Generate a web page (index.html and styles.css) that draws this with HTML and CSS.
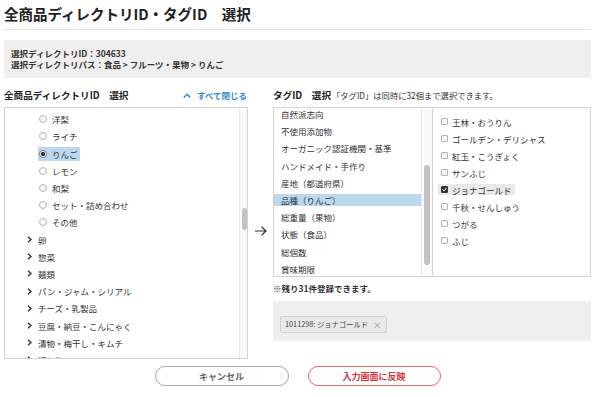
FILE: index.html
```html
<!DOCTYPE html>
<html lang="ja">
<head>
<meta charset="utf-8">
<title>全商品ディレクトリID・タグID 選択</title>
<link rel="stylesheet" href="styles.css">
</head>
<body>
<div class="page">
  <h1 class="title">全商品ディレクトリID・タグID　選択</h1>
  <div class="info">
    <p>選択ディレクトリID：304633</p>
    <p>選択ディレクトリパス：食品 &gt; フルーツ・果物 &gt; りんご</p>
  </div>
  <div class="cols">
    <section class="col-dir">
      <div class="col-head">
        <h2>全商品ディレクトリID　選択</h2>
        <a class="close-all"><svg width="8" height="5" viewBox="0 0 8 5"><path d="M0.8 4.4 L4 1.2 L7.2 4.4" stroke="#2f8ad8" stroke-width="1.4" fill="none"/></svg>すべて閉じる</a>
      </div>
      <div class="box dir-box">
        <ul class="tree">
          <li class="leaf"><span class="item"><span class="radio"></span>洋梨</span></li>
          <li class="leaf"><span class="item"><span class="radio"></span>ライチ</span></li>
          <li class="leaf"><span class="item selected"><span class="radio on"></span>りんご</span></li>
          <li class="leaf"><span class="item"><span class="radio"></span>レモン</span></li>
          <li class="leaf"><span class="item"><span class="radio"></span>和梨</span></li>
          <li class="leaf"><span class="item"><span class="radio"></span>セット・詰め合わせ</span></li>
          <li class="leaf"><span class="item"><span class="radio"></span>その他</span></li>
          <li class="node"><svg class="chev" width="5" height="7" viewBox="0 0 5 7"><path d="M1 0.8 L4 3.5 L1 6.2" stroke="#333" stroke-width="1.4" fill="none"/></svg>卵</li>
          <li class="node"><svg class="chev" width="5" height="7" viewBox="0 0 5 7"><path d="M1 0.8 L4 3.5 L1 6.2" stroke="#333" stroke-width="1.4" fill="none"/></svg>惣菜</li>
          <li class="node"><svg class="chev" width="5" height="7" viewBox="0 0 5 7"><path d="M1 0.8 L4 3.5 L1 6.2" stroke="#333" stroke-width="1.4" fill="none"/></svg>麺類</li>
          <li class="node"><svg class="chev" width="5" height="7" viewBox="0 0 5 7"><path d="M1 0.8 L4 3.5 L1 6.2" stroke="#333" stroke-width="1.4" fill="none"/></svg>パン・ジャム・シリアル</li>
          <li class="node"><svg class="chev" width="5" height="7" viewBox="0 0 5 7"><path d="M1 0.8 L4 3.5 L1 6.2" stroke="#333" stroke-width="1.4" fill="none"/></svg>チーズ・乳製品</li>
          <li class="node"><svg class="chev" width="5" height="7" viewBox="0 0 5 7"><path d="M1 0.8 L4 3.5 L1 6.2" stroke="#333" stroke-width="1.4" fill="none"/></svg>豆腐・納豆・こんにゃく</li>
          <li class="node"><svg class="chev" width="5" height="7" viewBox="0 0 5 7"><path d="M1 0.8 L4 3.5 L1 6.2" stroke="#333" stroke-width="1.4" fill="none"/></svg>漬物・梅干し・キムチ</li>
          <li class="node"><svg class="chev" width="5" height="7" viewBox="0 0 5 7"><path d="M1 0.8 L4 3.5 L1 6.2" stroke="#333" stroke-width="1.4" fill="none"/></svg>練り物</li>
        </ul>
        <div class="track track-dir"><div class="thumb"></div></div>
      </div>
    </section>
    <div class="arrow-col">
      <svg width="12" height="10" viewBox="0 0 12 10"><path d="M0 5 H11 M6.6 0.8 L11 5 L6.6 9.2" stroke="#333" stroke-width="1.2" fill="none"/></svg>
    </div>
    <section class="col-tag">
      <div class="col-head tag-head">
        <h2>タグID　選択</h2><span class="note">「タグID」は同時に32個まで選択できます。</span>
      </div>
      <div class="box tag-box">
        <ul class="tag-list">
          <li>自然派志向</li>
          <li>不使用添加物</li>
          <li>オーガニック認証機関・基準</li>
          <li>ハンドメイド・手作り</li>
          <li>産地（都道府県）</li>
          <li class="active">品種（りんご）</li>
          <li>総重量（果物）</li>
          <li>状態（食品）</li>
          <li>総個数</li>
          <li>賞味期限</li>
        </ul>
        <div class="track track-tag"><div class="thumb"></div></div>
        <ul class="check-list">
          <li><span class="citem"><span class="cb"></span>王林・おうりん</span></li>
          <li><span class="citem"><span class="cb"></span>ゴールデン・デリシャス</span></li>
          <li><span class="citem"><span class="cb"></span>紅玉・こうぎょく</span></li>
          <li><span class="citem"><span class="cb"></span>サンふじ</span></li>
          <li><span class="citem checked"><span class="cb on"><svg width="5" height="5" viewBox="0 0 5 5"><path d="M0.6 2.6 L2 3.9 L4.4 1" stroke="#fff" stroke-width="1" fill="none"/></svg></span>ジョナゴールド</span></li>
          <li><span class="citem"><span class="cb"></span>千秋・せんしゅう</span></li>
          <li><span class="citem"><span class="cb"></span>つがる</span></li>
          <li><span class="citem"><span class="cb"></span>ふじ</span></li>
        </ul>
      </div>
      <p class="remain">※残り31件登録できます。</p>
      <div class="chips"><span class="chip">1011298: ジョナゴールド<span class="x">×</span></span></div>
    </section>
  </div>
  <div class="actions">
    <button class="btn cancel">キャンセル</button>
    <button class="btn apply">入力画面に反映</button>
  </div>
</div>
</body>
</html>
```
FILE: styles.css
```css
* { box-sizing: border-box; }
body {
  margin: 0;
  font-family: "Noto Sans CJK JP", "Noto Sans", sans-serif;
  color: #333;
  background: #fff;
}
ul, p, h1, h2 { margin: 0; padding: 0; }
ul { list-style: none; }

.page {
  width: 600px;
  padding: 4px 9px 0 4px;
}

.title {
  font-size: 14.5px;
  line-height: 20px;
  font-weight: bold;
  color: #222;
  padding-bottom: 5px;
  border-bottom: 1px solid #e4e4e4;
}

.info {
  margin-top: 10px;
  background: #efefef;
  padding: 8px 7px 9px;
  font-size: 8.5px;
  line-height: 10.5px;
  font-weight: bold;
}

.cols {
  display: flex;
  margin-top: 10px;
}

.col-dir { width: 244px; flex: none; }

.col-head {
  display: flex;
  align-items: center;
  justify-content: space-between;
  height: 14px;
  margin-bottom: 5px;
}
.col-head h2 {
  font-size: 9.6px;
  line-height: 14px;
  font-weight: bold;
  color: #222;
}
.close-all {
  display: flex;
  align-items: center;
  gap: 6px;
  color: #2f8ad8;
  font-size: 8.5px;
  font-weight: bold;
  padding-right: 1px;
}

.box {
  border: 1px solid #d2d2d2;
  display: flex;
  background: #fff;
}

.dir-box { height: 252px; }

.tree {
  flex: 1;
  overflow: hidden;
  padding-top: 2.7px;
}
.tree li {
  height: 17.2px;
  display: flex;
  align-items: center;
  font-size: 8.5px;
  white-space: nowrap;
}
.tree .leaf { padding-left: 33px; }
.tree .node { padding-left: 22px; }
.chev { margin-right: 6px; flex: none; }

.item {
  display: flex;
  align-items: center;
  gap: 5px;
  padding: 1px 2px 1px 1px;
}
.item.selected { background: #bcd7ee; }

.radio {
  width: 8px;
  height: 8px;
  border: 1px solid #b8b8b8;
  border-radius: 50%;
  background: #f7f7f7;
  flex: none;
}
.radio.on {
  border-color: #777;
  background: radial-gradient(circle, #333 0 1.9px, #fff 2.4px);
}

.track {
  flex: none;
  border-left: 1px solid #e6e6e6;
  background: #fafafa;
}
.track-dir { width: 8px; padding: 100px 0 0 2px; }
.track-tag { width: 11px; padding: 57px 0 0 2px; }
.thumb {
  background: #c3c3c3;
  border-radius: 3px;
}
.track-dir .thumb { width: 4.5px; height: 22px; }
.track-tag .thumb { width: 6px; height: 100px; }

.arrow-col {
  width: 25px;
  flex: none;
  padding: 129px 0 0 7px;
}

.col-tag { flex: 1; }
.tag-head { justify-content: flex-start; }
.note {
  font-size: 8.3px;
  color: #333;
  margin-left: 1px;
}

.tag-box { height: 170px; }
.tag-list {
  width: 147px;
  flex: none;
  overflow: hidden;
}
.tag-list li {
  height: 12.2px;
  margin-bottom: 5px;
  display: flex;
  align-items: center;
  padding-left: 7px;
  font-size: 8.5px;
  white-space: nowrap;
}
.tag-list li.active { background: #bcd7ee; }

.check-list {
  flex: 1;
  border-left: 1px solid #d2d2d2;
  padding: 8px 0 0 5px;
}
.check-list li {
  height: 11px;
  margin-bottom: 6px;
  display: flex;
  align-items: center;
}
.citem {
  display: flex;
  align-items: center;
  gap: 4px;
  height: 11px;
  padding: 0 3px;
  font-size: 8.5px;
  white-space: nowrap;
}
.citem.checked { background: #e9e9e9; }
.cb {
  width: 7px;
  height: 7px;
  border: 1px solid #b4b4b4;
  border-radius: 1px;
  background: #f5f5f5;
  flex: none;
  display: flex;
  align-items: center;
  justify-content: center;
}
.cb.on { background: #333; border-color: #333; }

.remain {
  margin-top: 6px;
  font-size: 8.5px;
  line-height: 10px;
  font-weight: bold;
}

.chips {
  margin-top: 8px;
  background: #efefef;
  padding: 7px 7px 8px;
}
.chip {
  display: inline-flex;
  align-items: center;
  height: 17px;
  padding: 0 4px 0 4px;
  border: 1px solid #d0d0d0;
  border-radius: 2px;
  background: #e9e9e9;
  font-size: 7.3px;
  color: #444;
}
.chip .x {
  margin-left: 5px;
  color: #999;
  font-size: 8.5px;
}

.actions {
  display: flex;
  justify-content: center;
  gap: 19px;
  margin-top: 7px;
}
.btn {
  height: 20px;
  border-radius: 10px;
  background: #fff;
  font-family: "Noto Sans CJK JP", "Noto Sans", sans-serif;
  font-size: 9px;
  font-weight: bold;
  padding: 0;
}
.btn.cancel {
  width: 134px;
  border: 1px solid #aaa;
  color: #666;
}
.btn.apply {
  width: 133px;
  border: 1px solid #e2646c;
  color: #d8323d;
}
```
